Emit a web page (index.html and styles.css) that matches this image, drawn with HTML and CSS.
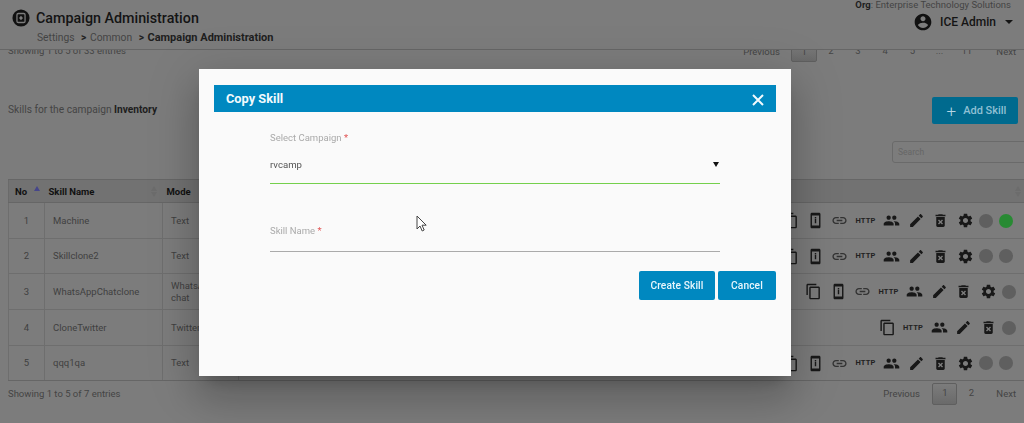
FILE: index.html
```html
<!DOCTYPE html>
<html lang="en">
<head>
<meta charset="utf-8">
<title>Campaign Administration</title>
<link rel="stylesheet" href="styles.css">
</head>
<body>
<svg class="defs" width="0" height="0" aria-hidden="true">
  <symbol id="i-copy" viewBox="0 0 24 24"><path d="M16 1H4c-1.1 0-2 .9-2 2v14h2V3h12V1zm3 4H8c-1.1 0-2 .9-2 2v14c0 1.1.9 2 2 2h11c1.1 0 2-.9 2-2V7c0-1.1-.9-2-2-2zm0 16H8V7h11v14z"/></symbol>
  <symbol id="i-phone" viewBox="0 0 24 24"><path d="M17 1H7c-1.1 0-2 .9-2 2v18c0 1.1.9 2 2 2h10c1.1 0 2-.9 2-2V3c0-1.1-.9-2-2-2zm0 18H7V5h10v14zM11 7h2v2h-2zm0 3h2v6h-2z"/></symbol>
  <symbol id="i-link" viewBox="0 0 24 24"><path d="M3.9 12c0-1.71 1.39-3.1 3.1-3.1h4V7H7c-2.76 0-5 2.24-5 5s2.24 5 5 5h4v-1.9H7c-1.71 0-3.1-1.39-3.1-3.1zM8 13h8v-2H8v2zm9-6h-4v1.9h4c1.71 0 3.1 1.39 3.1 3.1s-1.39 3.1-3.1 3.1h-4V17h4c2.76 0 5-2.24 5-5s-2.24-5-5-5z"/></symbol>
  <symbol id="i-people" viewBox="0 0 24 24"><path d="M16 11c1.66 0 2.99-1.34 2.99-3S17.66 5 16 5c-1.66 0-3 1.34-3 3s1.34 3 3 3zm-8 0c1.66 0 2.99-1.34 2.99-3S9.66 5 8 5C6.34 5 5 6.34 5 8s1.34 3 3 3zm0 2c-2.33 0-7 1.17-7 3.5V19h14v-2.5c0-2.33-4.67-3.5-7-3.5zm8 0c-.29 0-.62.02-.97.05 1.16.84 1.97 1.97 1.97 3.45V19h6v-2.5c0-2.33-4.67-3.5-7-3.5z"/></symbol>
  <symbol id="i-edit" viewBox="0 0 24 24"><path d="M3 17.25V21h3.75L17.81 9.94l-3.75-3.75L3 17.25zM20.71 7.04c.39-.39.39-1.02 0-1.41l-2.34-2.34c-.39-.39-1.02-.39-1.41 0l-1.83 1.83 3.75 3.75 1.83-1.83z"/></symbol>
  <symbol id="i-delete" viewBox="0 0 24 24"><path d="M6 19c0 1.1.9 2 2 2h8c1.1 0 2-.9 2-2V7H6v12zm2.46-7.12l1.41-1.41L12 12.59l2.12-2.12 1.41 1.41L13.41 14l2.12 2.12-1.41 1.41L12 15.41l-2.12 2.12-1.41-1.41L10.59 14l-2.13-2.12zM15.5 4l-1-1h-5l-1 1H5v2h14V4z"/></symbol>
  <symbol id="i-gear" viewBox="0 0 24 24"><path d="M19.14 12.94c.04-.3.06-.61.06-.94 0-.32-.02-.64-.07-.94l2.03-1.58c.18-.14.23-.41.12-.61l-1.92-3.32c-.12-.22-.37-.29-.59-.22l-2.39.96c-.5-.38-1.03-.7-1.62-.94l-.36-2.54c-.04-.24-.24-.41-.48-.41h-3.84c-.24 0-.43.17-.47.41l-.36 2.54c-.59.24-1.13.57-1.62.94l-2.39-.96c-.22-.08-.47 0-.59.22L2.74 8.87c-.12.21-.08.47.12.61l2.03 1.58c-.05.3-.09.63-.09.94s.02.64.07.94l-2.03 1.58c-.18.14-.23.41-.12.61l1.92 3.32c.12.22.37.29.59.22l2.39-.96c.5.38 1.03.7 1.62.94l.36 2.54c.05.24.24.41.48.41h3.84c.24 0 .44-.17.47-.41l.36-2.54c.59-.24 1.13-.56 1.62-.94l2.39.96c.22.08.47 0 .59-.22l1.92-3.32c.12-.22.07-.47-.12-.61l-2.01-1.58zM12 15.6c-1.98 0-3.6-1.62-3.6-3.6s1.62-3.6 3.6-3.6 3.6 1.62 3.6 3.6-1.62 3.6-3.6 3.6z"/></symbol>
</svg>

<div class="page">
  <header class="topbar">
    <div class="title-block">
      <div class="title-row">
        <svg class="logo" viewBox="0 0 20 20"><circle cx="10" cy="10" r="9.5"/><rect x="5.5" y="5" width="9" height="10" rx="1.5" fill="none" stroke="#7c7c7c" stroke-width="1.4"/><path d="M10 7.4l2.2 2.6-2.2 2.6-2.2-2.6z" fill="#7c7c7c"/></svg>
        <h1>Campaign Administration</h1>
      </div>
      <nav class="crumbs"><span>Settings</span><b class="sep">&gt;</b><span>Common</span><b class="sep">&gt;</b><strong>Campaign Administration</strong></nav>
    </div>
    <div class="user-block">
      <div class="org"><b>Org</b>: Enterprise Technology Solutions</div>
      <div class="user">
        <svg class="avatar" viewBox="0 0 24 24"><path d="M12 2C6.48 2 2 6.48 2 12s4.48 10 10 10 10-4.48 10-10S17.52 2 12 2zm0 3c1.66 0 3 1.34 3 3s-1.34 3-3 3-3-1.34-3-3 1.34-3 3-3zm0 14.2c-2.5 0-4.71-1.28-6-3.22.03-1.99 4-3.08 6-3.08 1.99 0 5.97 1.09 6 3.08-1.29 1.94-3.5 3.22-6 3.22z"/></svg>
        <span class="user-name">ICE Admin</span>
        <i class="caret"></i>
      </div>
    </div>
  </header>

  <main class="content">
    <div class="pager-row pager-top">
      <span class="info">Showing 1 to 5 of 33 entries</span>
      <div class="pager">
        <span class="pg-text">Previous</span><span class="pg-num current">1</span><span class="pg-num">2</span><span class="pg-num">3</span><span class="pg-num">4</span><span class="pg-num">5</span><span class="pg-num">...</span><span class="pg-num">11</span><span class="pg-text">Next</span>
      </div>
    </div>

    <div class="toolbar">
      <span class="for-campaign">Skills for the campaign <b>Inventory</b></span>
      <button class="add-btn"><span class="plus">+</span>Add Skill</button>
    </div>

    <div class="search-row"><div class="search">Search</div></div>

    <table class="skills">
      <colgroup><col class="c-no"><col class="c-name"><col class="c-mode"><col></colgroup>
      <thead>
        <tr><th class="no">No<i class="sort-up"></i></th><th>Skill Name<i class="sort-dim"></i></th><th>Mode</th><th class="last-head"><i class="sort-dim"></i></th></tr>
      </thead>
      <tbody>
        <tr class="r1">
          <td class="no">1</td><td class="name">Machine</td><td>Text</td>
          <td><div class="acts">
            <svg class="ic"><use href="#i-copy"/></svg><svg class="ic"><use href="#i-phone"/></svg><svg class="ic lnk"><use href="#i-link"/></svg><span class="http">HTTP</span><svg class="ic"><use href="#i-people"/></svg><svg class="ic"><use href="#i-edit"/></svg><svg class="ic"><use href="#i-delete"/></svg><svg class="ic"><use href="#i-gear"/></svg><i class="dot"></i><i class="dot on"></i>
          </div></td>
        </tr>
        <tr class="r2">
          <td class="no">2</td><td class="name">Skillclone2</td><td>Text</td>
          <td><div class="acts">
            <svg class="ic"><use href="#i-copy"/></svg><svg class="ic"><use href="#i-phone"/></svg><svg class="ic lnk"><use href="#i-link"/></svg><span class="http">HTTP</span><svg class="ic"><use href="#i-people"/></svg><svg class="ic"><use href="#i-edit"/></svg><svg class="ic"><use href="#i-delete"/></svg><svg class="ic"><use href="#i-gear"/></svg><i class="dot"></i><i class="dot"></i>
          </div></td>
        </tr>
        <tr class="r3">
          <td class="no">3</td><td class="name">WhatsAppChatclone</td><td>WhatsApp chat</td>
          <td><div class="acts">
            <svg class="ic"><use href="#i-copy"/></svg><svg class="ic"><use href="#i-phone"/></svg><svg class="ic lnk"><use href="#i-link"/></svg><span class="http">HTTP</span><svg class="ic"><use href="#i-people"/></svg><svg class="ic"><use href="#i-edit"/></svg><svg class="ic"><use href="#i-delete"/></svg><svg class="ic"><use href="#i-gear"/></svg><i class="dot"></i>
          </div></td>
        </tr>
        <tr class="r4">
          <td class="no">4</td><td class="name">CloneTwitter</td><td>Twitter</td>
          <td><div class="acts">
            <svg class="ic"><use href="#i-copy"/></svg><span class="http">HTTP</span><svg class="ic"><use href="#i-people"/></svg><svg class="ic"><use href="#i-edit"/></svg><svg class="ic"><use href="#i-delete"/></svg><i class="dot"></i>
          </div></td>
        </tr>
        <tr class="r5">
          <td class="no">5</td><td class="name">qqq1qa</td><td>Text</td>
          <td><div class="acts">
            <svg class="ic"><use href="#i-copy"/></svg><svg class="ic"><use href="#i-phone"/></svg><svg class="ic lnk"><use href="#i-link"/></svg><span class="http">HTTP</span><svg class="ic"><use href="#i-people"/></svg><svg class="ic"><use href="#i-edit"/></svg><svg class="ic"><use href="#i-delete"/></svg><svg class="ic"><use href="#i-gear"/></svg><i class="dot"></i><i class="dot"></i>
          </div></td>
        </tr>
      </tbody>
    </table>

    <div class="pager-row pager-bottom">
      <span class="info">Showing 1 to 5 of 7 entries</span>
      <div class="pager">
        <span class="pg-text">Previous</span><span class="pg-num current">1</span><span class="pg-num">2</span><span class="pg-text">Next</span>
      </div>
    </div>
  </main>
</div>

<div class="overlay">
  <section class="modal">
    <div class="modal-head">
      <h2>Copy Skill</h2>
      <svg class="close" viewBox="0 0 14 14"><path d="M2 2l10 10M12 2L2 12"/></svg>
    </div>
    <form class="modal-form">
      <div class="field field-select">
        <label>Select Campaign <em>*</em></label>
        <div class="value">rvcamp<i class="select-arrow"></i></div>
      </div>
      <div class="field field-name">
        <label>Skill Name <em>*</em></label>
      </div>
    </form>
    <div class="modal-actions">
      <button class="btn" type="button">Create Skill</button>
      <button class="btn" type="button">Cancel</button>
    </div>
  </section>
  <svg class="cursor" viewBox="0 0 12 17" width="12" height="17"><path d="M1 1v13l3-3 2.2 5 2-1-2.2-4.8h4.2z" fill="#fff" stroke="#444" stroke-width="1"/></svg>
</div>
</body>
</html>
```
FILE: styles.css
```css
* { box-sizing: border-box; }
html, body { margin: 0; padding: 0; height: 423px; overflow: hidden; background: #7c7c7c; }
body { font-family: Roboto, "Liberation Sans", sans-serif; color: #404040; font-size: 9.5px; }
.defs { position: absolute; }

.page { height: 423px; overflow: hidden; }

.topbar {
  position: relative; z-index: 2; height: 50px; background: #7c7c7c; border-bottom: 1px solid #666;
  display: flex; justify-content: space-between; padding: 0 8px 0 12px;
}
.title-row { display: flex; align-items: center; gap: 6px; margin-top: 8px; height: 20px; }
.logo { width: 18px; height: 18px; fill: #111; }
h1 { margin: 0; font-size: 14.3px; font-weight: 500; color: #141414; }
.crumbs { margin: 3px 0 0 25px; font-size: 10.3px; color: #444; display: flex; align-items: center; line-height: 14px; }
.crumbs strong { font-size: 11px; font-weight: 700; color: #1e1e1e; }
.sep { margin: 0 3.5px 0 6.5px; color: #222; font-weight: 700; }

.user-block { display: flex; flex-direction: column; align-items: flex-end; }
.org { font-size: 9.5px; line-height: 12px; color: #444; margin-top: -1px; padding-right: 5px; }
.org b { color: #1e1e1e; }
.user { display: flex; align-items: center; margin-top: 1px; height: 20px; padding-right: 3px; }
.avatar { width: 20px; height: 20px; fill: #111; margin-right: 7px; }
.user-name { font-size: 12px; font-weight: 500; color: #141414; }
.caret { width: 0; height: 0; border: 4px solid transparent; border-top-color: #141414; border-bottom-width: 0; margin-left: 9px; }

.content { margin-top: -8px; }
.pager-row { display: flex; justify-content: space-between; align-items: center; padding: 0 8px; height: 22px; }
.pager-top { align-items: flex-start; height: 20px; }
.info { font-size: 9.5px; line-height: 18px; color: #444; }
.pager { display: flex; align-items: center; font-size: 9.5px; color: #444; }
.pager-top .pager { height: 20px; }
.pager-bottom { margin-top: 2px; }
.pager-bottom .pager { height: 22px; }
.pg-text { width: 48px; padding-bottom: 2px; }
.pg-text:last-child { width: auto; margin-left: 16px; }
.pg-num { width: 27.2px; text-align: center; line-height: 20px; padding-bottom: 2px; }
.pg-num.current {
  width: 26px; height: 100%; line-height: 18px; padding-bottom: 0; border: 1px solid #5f5f5f; border-radius: 2px;
  background: linear-gradient(#7c7c7c, #6a6a6a);
}
.pager-bottom .pg-text:first-child { margin-right: 1px; }
.pager-bottom .pg-num { width: 28px; }
.pager-bottom .pg-num.current { width: 25px; }
.pager-bottom .pg-text:last-child { margin-left: 11px; }

.toolbar { display: flex; justify-content: space-between; align-items: center; margin-top: 35px; height: 27px; padding: 0 6px 0 8px; }
.for-campaign { font-size: 10.2px; color: #444; margin-bottom: 2px; }
.for-campaign b { color: #1e1e1e; }
.add-btn {
  width: 86px; height: 27px; background: #006a8e; border: 0; border-radius: 2px; color: #8fc0d4;
  font: 500 11px Roboto, sans-serif; display: flex; align-items: center; justify-content: center; padding: 0 0 0 3px;
}
.plus { font-size: 17px; font-weight: 300; margin-right: 7px; line-height: 20px; color: #b5d6e4; }

.search-row { display: flex; justify-content: flex-end; margin-top: 17px; }
.search { width: 140px; margin-right: -8px; height: 22px; border: 1px solid #6a6a6a; border-radius: 3px; padding: 0 5px; line-height: 20px; font-size: 8.5px; color: #666; flex: none; }

.skills { margin: 16px 0 0 8px; width: 1016px; border-collapse: collapse; table-layout: fixed; font-size: 9.5px; color: #404040; }
.c-no { width: 36px; }
.c-name { width: 118px; }
.c-mode { width: 76px; }
.skills th { height: 23px; background: #727272; border-top: 1px solid #666; border-bottom: 1px solid #666; font-size: 9.5px; font-weight: 700; color: #111; text-align: left; padding: 0 4px; position: relative; }
.skills th.no { padding-left: 6px; border-left: 1px solid #6a6a6a; }
.skills td { border: 1px solid #6e6e6e; border-right: 0; padding: 0 9px 0 8px; line-height: 11.5px; }
.skills td.no { text-align: center; padding: 0; }
.r1 td, .r3 td, .r4 td { height: 36px; }
.r2 td, .r5 td { height: 35px; }
.skills tr:last-child td { border-bottom-color: #666; }
.sort-up { position: absolute; left: 25px; top: 6px; border: 3.5px solid transparent; border-bottom: 5px solid #46468a; border-top: 0; }
.sort-dim { position: absolute; right: 5px; top: 6px; width: 7px; height: 11px; }
.sort-dim::before, .sort-dim::after { content: ""; position: absolute; left: 0; border: 3.5px solid transparent; }
.sort-dim::before { top: 0; border-top: 0; border-bottom: 5px solid #6c6c6c; }
.sort-dim::after { bottom: 0; border-bottom: 0; border-top: 5px solid #6c6c6c; }
th.last-head .sort-dim { right: 2px; }

.acts { display: flex; justify-content: flex-end; align-items: center; }
.r1 .acts, .r2 .acts, .r5 .acts { margin-right: 2px; }
.r3 .acts, .r4 .acts { margin-right: -1px; }
.ic { width: 17px; height: 17px; fill: #181818; margin: 0 3.75px; flex: none; }
.ic.lnk { fill: #333; }
.http { width: 27.5px; text-align: center; font-size: 7.5px; font-weight: 700; color: #222; letter-spacing: .2px; flex: none; }
.dot { width: 14px; height: 14px; border-radius: 50%; background: #5f5f5f; margin-left: 6px; flex: none; }
.ic + .dot { margin-left: 1.75px; }
.dot.on { background: #288a33; }

.overlay { position: fixed; inset: 0; z-index: 10; }
.modal {
  position: absolute; left: 199px; top: 69px; width: 592px; height: 307px; background: #fafafa;
  padding: 16px 15px 0;
  box-shadow: 0 11px 15px -7px rgba(0,0,0,.2), 0 24px 38px 3px rgba(0,0,0,.14), 0 9px 46px 8px rgba(0,0,0,.12);
}
.modal-head { height: 27px; background: #0088c0; display: flex; justify-content: space-between; align-items: center; padding: 0 11px 0 12px; }
h2 { margin: 0; font-size: 12.8px; font-weight: 700; color: #f2fafd; }
.close { width: 14px; height: 14px; margin-top: 2px; stroke: #f2fafd; stroke-width: 2; fill: none; }
.modal-form { padding: 0 56px; }
.field label { display: block; font-size: 9.5px; line-height: 12px; color: #aaa; }
.field em { color: #e25555; font-style: normal; }
.field-select { padding-top: 20px; height: 72px; border-bottom: 1px solid #74d04c; }
.value { position: relative; margin-top: 15px; font-size: 9.6px; line-height: 12px; color: #555; }
.select-arrow { position: absolute; right: 1px; top: 3px; border: 3px solid transparent; border-top: 5px solid #111; border-bottom: 0; }
.field-name { margin-top: 40px; padding-top: 1px; height: 28px; border-bottom: 1px solid #aaa; }
.modal-actions { display: flex; justify-content: flex-end; gap: 3px; margin-top: 19px; }
.btn {
  height: 29px; border: 0; border-radius: 2px; background: #0088c0; color: #e8f6fc; padding: 0;
  font: 500 10.2px Roboto, sans-serif; letter-spacing: .1px;
}
.btn:first-child { width: 76px; }
.btn:last-child { width: 58px; }
.cursor { position: absolute; left: 416px; top: 215px; }
```
